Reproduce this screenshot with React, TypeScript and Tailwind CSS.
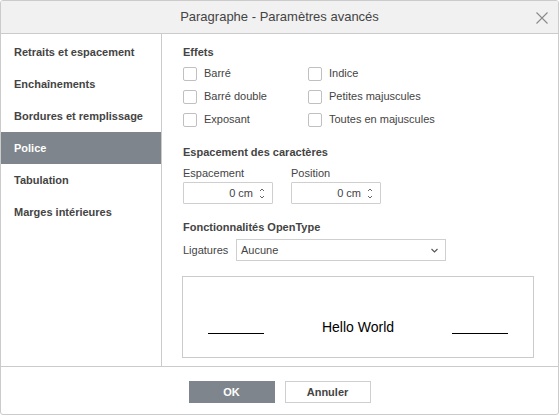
import React from "react";

const font = { fontFamily: '"Liberation Sans", Arial, sans-serif' };

function Check({ label }: { label: string }) {
  return (
    <div className="flex h-[23px] items-center">
      <span className="block h-[14px] w-[14px] rounded-[2px] border border-[#c0c0c0] bg-white" />
      <span className="ml-[7px] text-[11px] text-[#444]">{label}</span>
    </div>
  );
}

function Spin({ value }: { value: string }) {
  return (
    <div className="relative flex h-[22px] w-[90px] items-center justify-end rounded-[1px] border border-[#cfcfcf] bg-white pr-[19px] text-[11px] text-[#444]">
      {value}
      <svg className="absolute right-[7px] top-[4px]" width="6" height="13" viewBox="0 0 6 13" fill="none" stroke="#666" strokeWidth="1">
        <path d="M1 4 L3 2 L5 4" />
        <path d="M1 9 L3 11 L5 9" />
      </svg>
    </div>
  );
}

export default function App() {
  const cats = [
    "Retraits et espacement",
    "Enchaînements",
    "Bordures et remplissage",
    "Police",
    "Tabulation",
    "Marges intérieures",
  ];
  return (
    <div style={font} className="flex h-[415px] w-[559px] flex-col overflow-hidden rounded-[3px] border border-[#cbcbcb] bg-white text-[#444]">
      <div className="relative flex h-[33px] shrink-0 items-center justify-center border-b border-[#cbcbcb] bg-[#f1f1f1] text-[13px] text-[#444]">
        Paragraphe - Paramètres avancés
        <svg className="absolute right-[10px] top-[11px]" width="12" height="12" viewBox="0 0 12 12" stroke="#8a8a8a" strokeWidth="1.1">
          <path d="M0.5 0.5 L11.5 11.5 M11.5 0.5 L0.5 11.5" />
        </svg>
      </div>
      <div className="flex h-[332px] shrink-0">
        <div className="w-[161px] shrink-0 border-r border-[#cbcbcb] pt-[2px]">
          {cats.map((c) => (
            <div
              key={c}
              className={
                c === "Police"
                  ? "flex h-[32px] items-center bg-[#7e858c] pl-[13px] text-[11px] font-bold text-white"
                  : "flex h-[32px] items-center pl-[13px] text-[11px] font-bold text-[#444]"
              }
            >
              {c}
            </div>
          ))}
        </div>
        <div className="flex flex-1 flex-col pl-[21px] pt-[11px]">
          <div className="h-[14px] text-[11px] font-bold leading-[14px]">Effets</div>
          <div className="mt-[3px] flex">
            <div className="w-[125px]">
              <Check label="Barré" />
              <Check label="Barré double" />
              <Check label="Exposant" />
            </div>
            <div>
              <Check label="Indice" />
              <Check label="Petites majuscules" />
              <Check label="Toutes en majuscules" />
            </div>
          </div>
          <div className="mt-[14px] h-[14px] text-[11px] font-bold leading-[14px]">Espacement des caractères</div>
          <div className="mt-[7px] flex gap-[18px]">
            <div>
              <div className="h-[14px] text-[11px] leading-[14px]">Espacement</div>
              <div className="mt-[2px]">
                <Spin value="0 cm" />
              </div>
            </div>
            <div>
              <div className="h-[14px] text-[11px] leading-[14px]">Position</div>
              <div className="mt-[2px]">
                <Spin value="0 cm" />
              </div>
            </div>
          </div>
          <div className="mt-[16px] h-[14px] text-[11px] font-bold leading-[14px]">Fonctionnalités OpenType</div>
          <div className="mt-[5px] flex items-center">
            <span className="w-[53px] text-[11px]">Ligatures</span>
            <div className="relative flex h-[22px] w-[210px] items-center border border-[#cfcfcf] bg-white pl-[4px] text-[11px] text-[#444]">
              Aucune
              <svg className="absolute right-[7px] top-[8px]" width="7" height="5" viewBox="0 0 7 5" fill="none" stroke="#555" strokeWidth="1.1">
                <path d="M0.5 1 L3.5 4 L6.5 1" />
              </svg>
            </div>
          </div>
          <div className="mt-[15px] flex h-[82px] w-[352px] -translate-x-px items-end justify-between border border-[#cbcbcb] bg-white pb-[23px] pl-[25px] pr-[25px]">
            <span className="block h-[1px] w-[56px] bg-black" />
            <span className="mb-[-1px] text-[14px] leading-[16px] text-black">Hello World</span>
            <span className="block h-[1px] w-[56px] bg-black" />
          </div>
        </div>
      </div>
      <div className="flex flex-1 justify-center gap-[10px] border-t border-[#cbcbcb] pt-[14px]">
        <div className="flex h-[22px] w-[86px] items-center justify-center bg-[#7e858c] text-[11px] font-bold text-white">OK</div>
        <div className="flex h-[22px] w-[86px] items-center justify-center border border-[#cfcfcf] bg-white text-[11px] font-bold text-[#444]">Annuler</div>
      </div>
    </div>
  );
}
